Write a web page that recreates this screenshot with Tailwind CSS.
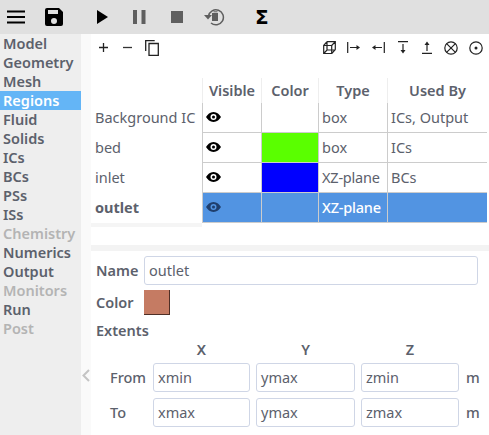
<!DOCTYPE html>
<html lang="en">
<head>
    <meta charset="UTF-8" />
    <title>Regions</title>
    <script src="https://cdn.jsdelivr.net/npm/@tailwindcss/browser@4"></script>
</head>
<body class="bg-white">
<div class="relative w-[489px] h-[435px] overflow-hidden flex flex-col font-['Noto_Sans',sans-serif] text-[14.5px] text-[#5c616c]">
    <!-- toolbar -->
    <div class="h-[34px] shrink-0 bg-[#e0e0e0] flex items-center">
        <svg class="ml-[7px]" width="18" height="14" viewBox="0 0 18 14"><path d="M0 1.5h18M0 7h18M0 12.500h18" stroke="#000" stroke-width="2"/></svg>
        <svg class="ml-[20px]" width="18" height="18" viewBox="0 0 18 18"><path fill-rule="evenodd" d="M2 0h12l4 4v12a2 2 0 0 1-2 2H2a2 2 0 0 1-2-2V2a2 2 0 0 1 2-2zm1 2v4h10V2zm6 8a3 3 0 1 0 0 6 3 3 0 0 0 0-6z" fill="#000"/></svg>
        <svg class="ml-[34px]" width="11" height="14" viewBox="0 0 11 14"><path d="M0 0l11 7-11 7z" fill="#000"/></svg>
        <svg class="ml-[25px]" width="13" height="14" viewBox="0 0 13 14"><path d="M0 0h4v14H0zM8.500 0h4v14h-4z" fill="#5f5f5f"/></svg>
        <svg class="ml-[25px]" width="12" height="12" viewBox="0 0 12 12"><path d="M0 0h12v12H0z" fill="#5f5f5f"/></svg>
        <svg class="ml-[21px]" width="21" height="18" viewBox="0 0 21 18"><path d="M4.500 8a7.500 7.500 0 1 1 2.500 7" fill="none" stroke="#5f5f5f" stroke-width="1.500"/><path d="M0 7h8l-4 4.500z" fill="#5f5f5f"/><path d="M8 5h6v8H8z" fill="#5f5f5f"/><path d="M9.500 3.800h4" stroke="#5f5f5f"/></svg>
        <span class="ml-[30px] font-['DejaVu_Sans',sans-serif] font-bold text-[20px] leading-none text-black">Σ</span>
    </div>

    <div class="flex flex-1 min-h-0">
        <!-- sidebar -->
        <nav class="w-[81px] shrink-0 bg-[#eeeeee] font-semibold leading-[19px]">
            <div class="pl-[3px] h-[19px]">Model</div>
            <div class="pl-[3px] h-[19px]">Geometry</div>
            <div class="pl-[3px] h-[19px]">Mesh</div>
            <div class="pl-[3px] h-[19px] bg-[#64b5f6] text-white">Regions</div>
            <div class="pl-[3px] h-[19px]">Fluid</div>
            <div class="pl-[3px] h-[19px]">Solids</div>
            <div class="pl-[3px] h-[19px]">ICs</div>
            <div class="pl-[3px] h-[19px]">BCs</div>
            <div class="pl-[3px] h-[19px]">PSs</div>
            <div class="pl-[3px] h-[19px]">ISs</div>
            <div class="pl-[3px] h-[19px] text-[#b4b4b4]">Chemistry</div>
            <div class="pl-[3px] h-[19px]">Numerics</div>
            <div class="pl-[3px] h-[19px]">Output</div>
            <div class="pl-[3px] h-[19px] text-[#b4b4b4]">Monitors</div>
            <div class="pl-[3px] h-[19px]">Run</div>
            <div class="pl-[3px] h-[19px] text-[#b4b4b4]">Post</div>
        </nav>
        <div class="w-[10px] shrink-0 bg-[#fafafa]"></div>

        <main class="flex-1 min-w-0 flex flex-col">
            <!-- region actions -->
            <div class="h-[27px] shrink-0 flex items-center justify-between pr-[6px]">
                <div class="flex items-center pl-[7px]">
                    <svg width="11" height="11" viewBox="0 0 11 11"><path d="M5.500 1v9M1 5.500h9" stroke="#222" stroke-width="1.300"/></svg>
                    <svg class="ml-[13px]" width="11" height="11" viewBox="0 0 11 11"><path d="M1 5.500h9" stroke="#333" stroke-width="1.300"/></svg>
                    <svg class="ml-[12px]" width="14" height="16" viewBox="0 0 14 16"><path d="M.7 11V.7h9M4 3.500h9.300v11.800H4z" fill="none" stroke="#222" stroke-width="1.300"/></svg>
                </div>
                <div class="flex items-center gap-[11px]">
                    <svg width="13" height="13" viewBox="0 0 13 13"><path d="M.7 4.500h8v8h-8zM4 .7h8.300v8M.7 4.500L4 .7M8.700 4.500L12.300.7M.7 12.500L4 9h8.300M4 .7V9M8.700 12.500L12.300 8.700" fill="none" stroke="#222" stroke-width="1.200"/></svg>
                    <svg width="13" height="11" viewBox="0 0 13 11"><path d="M.7 0v11M3 5.500h8" stroke="#222" stroke-width="1.200"/><path d="M13 5.500l-3.500-2.500v5z" fill="#222"/></svg>
                    <svg class="ml-[1px]" width="13" height="11" viewBox="0 0 13 11"><path d="M12.300 0v11M2 5.500h8" stroke="#222" stroke-width="1.200"/><path d="M0 5.500l3.500-2.500v5z" fill="#222"/></svg>
                    <svg class="ml-[1px]" width="12" height="13" viewBox="0 0 12 13"><path d="M1 .7h10M6 3v7" stroke="#222" stroke-width="1.200"/><path d="M6 12.500l-2.500-3.500h5z" fill="#222"/></svg>
                    <svg class="ml-[1px]" width="12" height="13" viewBox="0 0 12 13"><path d="M1 12.300h10M6 3v7" stroke="#222" stroke-width="1.200"/><path d="M6 .5L3.500 4h5z" fill="#222"/></svg>
                    <svg width="14" height="14" viewBox="0 0 14 14"><circle cx="7" cy="7" r="6.200" fill="none" stroke="#222" stroke-width="1.200"/><path d="M2.600 2.600l8.800 8.800M11.400 2.600l-8.800 8.800" stroke="#222" stroke-width="1.200"/></svg>
                    <svg width="14" height="14" viewBox="0 0 14 14"><circle cx="7" cy="7" r="6.200" fill="none" stroke="#222" stroke-width="1.200"/><circle cx="7" cy="7" r="1.500" fill="#222"/></svg>
                </div>
            </div>

            <!-- regions table -->
            <div class="mt-[17px] h-[145px] shrink-0 grid grid-cols-[111px_59px_57px_69px_100px] grid-rows-[25px_30px_30px_30px_30px] leading-[29px]">
                <div></div>
                <div class="border-l border-[#eeeeee] font-semibold text-center leading-[25px]">Visible</div>
                <div class="border-l border-[#eeeeee] font-semibold text-center leading-[25px]">Color</div>
                <div class="border-l border-[#eeeeee] font-semibold text-center leading-[25px]">Type</div>
                <div class="border-l border-[#eeeeee] font-semibold text-center leading-[25px]">Used By</div>

                <div class="pl-[4px] whitespace-nowrap">Background IC</div>
                <div class="border-l border-b border-[#cccccc] pl-[3px] flex items-center pb-[2px]"><svg width="15" height="10" viewBox="0 0 15 10"><path fill-rule="evenodd" d="M7.500 0C4 0 1.500 2.500 0 5c1.500 2.500 4 5 7.500 5S13.500 7.500 15 5C13.500 2.500 11 0 7.500 0zm0 2a3 3 0 1 1 0 6 3 3 0 0 1 0-6zm0 1.500a1.500 1.500 0 1 0 0 3 1.500 1.500 0 0 0 0-3z" fill="#000"/></svg></div>
                <div class="border-l border-b border-[#cccccc]"></div>
                <div class="border-l border-b border-[#cccccc] pl-[3px]">box</div>
                <div class="border-l border-b border-[#cccccc] pl-[3px] whitespace-nowrap">ICs, Output</div>

                <div class="pl-[4px]">bed</div>
                <div class="border-l border-b border-[#cccccc] pl-[3px] flex items-center pb-[2px]"><svg width="15" height="10" viewBox="0 0 15 10"><path fill-rule="evenodd" d="M7.500 0C4 0 1.500 2.500 0 5c1.500 2.500 4 5 7.500 5S13.500 7.500 15 5C13.500 2.500 11 0 7.500 0zm0 2a3 3 0 1 1 0 6 3 3 0 0 1 0-6zm0 1.500a1.500 1.500 0 1 0 0 3 1.500 1.500 0 0 0 0-3z" fill="#000"/></svg></div>
                <div class="border-l border-b border-[#cccccc] bg-[#5aff00]"></div>
                <div class="border-l border-b border-[#cccccc] pl-[3px]">box</div>
                <div class="border-l border-b border-[#cccccc] pl-[3px]">ICs</div>

                <div class="pl-[4px]">inlet</div>
                <div class="border-l border-b border-[#cccccc] pl-[3px] flex items-center pb-[2px]"><svg width="15" height="10" viewBox="0 0 15 10"><path fill-rule="evenodd" d="M7.500 0C4 0 1.500 2.500 0 5c1.500 2.500 4 5 7.500 5S13.500 7.500 15 5C13.500 2.500 11 0 7.500 0zm0 2a3 3 0 1 1 0 6 3 3 0 0 1 0-6zm0 1.500a1.500 1.500 0 1 0 0 3 1.500 1.500 0 0 0 0-3z" fill="#000"/></svg></div>
                <div class="border-l border-b border-[#cccccc] bg-[#0000ff]"></div>
                <div class="border-l border-b border-[#cccccc] pl-[3px] whitespace-nowrap tracking-[-0.2px]">XZ-plane</div>
                <div class="border-l border-b border-[#cccccc] pl-[3px]">BCs</div>

                <div class="pl-[4px] font-bold">outlet</div>
                <div class="border-l border-b border-[#cccccc] bg-[#5294e2] pl-[3px] flex items-center pb-[2px]"><svg width="15" height="10" viewBox="0 0 15 10"><path fill-rule="evenodd" d="M7.500 0C4 0 1.500 2.500 0 5c1.500 2.500 4 5 7.500 5S13.500 7.500 15 5C13.500 2.500 11 0 7.500 0zm0 2a3 3 0 1 1 0 6 3 3 0 0 1 0-6zm0 1.500a1.500 1.500 0 1 0 0 3 1.500 1.500 0 0 0 0-3z" fill="#1f3f6e"/></svg></div>
                <div class="border-l border-b border-[#cccccc] bg-[#5294e2]"></div>
                <div class="border-l border-b border-[#cccccc] bg-[#5294e2] pl-[3px] text-white font-medium whitespace-nowrap tracking-[-0.2px]">XZ-plane</div>
                <div class="border-l border-b border-[#cccccc] bg-[#5294e2]"></div>
            </div>
            <div class="h-[4px] w-[111px] shrink-0 bg-[#f5f5f5]"></div>

            <!-- splitter -->
            <div class="mt-[18px] h-[6px] shrink-0 bg-[#f3f3f3]"></div>

            <!-- details -->
            <div class="flex-1 pl-[5px] font-semibold">
                <div class="mt-[5px] flex items-center h-[29px]">
                    <span class="w-[48px]">Name</span>
                    <div class="w-[334px] h-[29px] border border-[#cfd6e6] rounded-[3px] pl-[4px] leading-[26px] font-normal">outlet</div>
                </div>
                <div class="mt-[5px] flex items-center h-[25px]">
                    <span class="w-[48px]">Color</span>
                    <div class="w-[26px] h-[25px] bg-[#c57b63] border-r border-b border-[#4f2f26]"></div>
                </div>
                <div class="mt-[6px] h-[19px] leading-[19px]">Extents</div>
                <div class="h-[19px] leading-[19px] flex">
                    <span class="ml-[57px] w-[97px] text-center">X</span>
                    <span class="ml-[6px] w-[99px] text-center">Y</span>
                    <span class="ml-[6px] w-[98px] text-center">Z</span>
                </div>
                <div class="mt-[4px] flex items-center font-medium">
                    <span class="w-[57px] pl-[14px]">From</span>
                    <div class="w-[97px] h-[29px] border border-[#cfd6e6] rounded-[3px] pl-[4px] leading-[26px] font-normal">xmin</div>
                    <div class="ml-[6px] w-[99px] h-[29px] border border-[#cfd6e6] rounded-[3px] pl-[4px] leading-[26px] font-normal">ymax</div>
                    <div class="ml-[6px] w-[98px] h-[29px] border border-[#cfd6e6] rounded-[3px] pl-[4px] leading-[26px] font-normal">zmin</div>
                    <span class="ml-[7px]">m</span>
                </div>
                <div class="mt-[6px] flex items-center font-medium">
                    <span class="w-[57px] pl-[14px]">To</span>
                    <div class="w-[97px] h-[29px] border border-[#cfd6e6] rounded-[3px] pl-[4px] leading-[26px] font-normal">xmax</div>
                    <div class="ml-[6px] w-[99px] h-[29px] border border-[#cfd6e6] rounded-[3px] pl-[4px] leading-[26px] font-normal">ymax</div>
                    <div class="ml-[6px] w-[98px] h-[29px] border border-[#cfd6e6] rounded-[3px] pl-[4px] leading-[26px] font-normal">zmax</div>
                    <span class="ml-[7px]">m</span>
                </div>
            </div>
        </main>
    </div>

    <!-- sidebar collapse handle -->
    <svg class="absolute left-[82px] top-[369px]" width="8" height="13" viewBox="0 0 8 13"><path d="M7 1L1.500 6.500 7 12" fill="none" stroke="#c4c4c4" stroke-width="2"/></svg>
</div>
</body>
</html>
